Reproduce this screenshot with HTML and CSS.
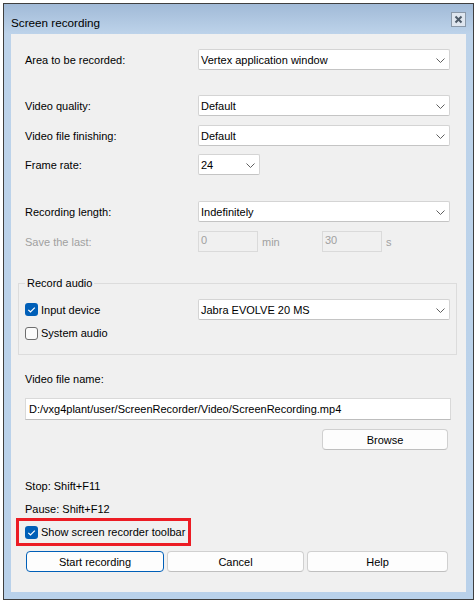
FILE: index.html
```html
<!DOCTYPE html>
<html lang="en">
<head>
<meta charset="utf-8">
<title>Screen recording</title>
<link rel="stylesheet" href="styles.css">
</head>
<body>
<div class="window">
  <div class="titlebar">
    <span class="title">Screen recording</span>
    <span class="close">
      <svg width="15" height="15" viewBox="0 0 15 15">
        <rect x="0.5" y="0.5" width="14" height="14" fill="#dfe6ef" stroke="#8a98a8"/>
        <path d="M4.5 4.5 L10.5 10.5 M10.5 4.5 L4.5 10.5" stroke="#4d5a68" stroke-width="2"/>
      </svg>
    </span>
  </div>
  <div class="client">
    <div class="row r-area">
      <span class="lbl">Area to be recorded:</span>
      <div class="combo"><span class="val">Vertex application window</span><svg class="chev" width="9" height="5" viewBox="0 0 9 5"><polyline points="0.5,0.5 4.5,4.5 8.5,0.5" fill="none" stroke="#5f5f5f"/></svg></div>
    </div>
    <div class="row r-quality">
      <span class="lbl">Video quality:</span>
      <div class="combo"><span class="val">Default</span><svg class="chev" width="9" height="5" viewBox="0 0 9 5"><polyline points="0.5,0.5 4.5,4.5 8.5,0.5" fill="none" stroke="#5f5f5f"/></svg></div>
    </div>
    <div class="row r-finish">
      <span class="lbl">Video file finishing:</span>
      <div class="combo"><span class="val">Default</span><svg class="chev" width="9" height="5" viewBox="0 0 9 5"><polyline points="0.5,0.5 4.5,4.5 8.5,0.5" fill="none" stroke="#5f5f5f"/></svg></div>
    </div>
    <div class="row r-rate">
      <span class="lbl">Frame rate:</span>
      <div class="combo small"><span class="val">24</span><svg class="chev" width="9" height="5" viewBox="0 0 9 5"><polyline points="0.5,0.5 4.5,4.5 8.5,0.5" fill="none" stroke="#5f5f5f"/></svg></div>
    </div>
    <div class="row r-length">
      <span class="lbl">Recording length:</span>
      <div class="combo"><span class="val">Indefinitely</span><svg class="chev" width="9" height="5" viewBox="0 0 9 5"><polyline points="0.5,0.5 4.5,4.5 8.5,0.5" fill="none" stroke="#5f5f5f"/></svg></div>
    </div>
    <div class="row r-save disabled">
      <span class="lbl">Save the last:</span>
      <div class="field small">0</div>
      <span class="unit unit-min">min</span>
      <div class="field small">30</div>
      <span class="unit">s</span>
    </div>

    <fieldset class="group">
      <legend>Record audio</legend>
      <div class="row r-input">
        <span class="lbl check-lbl"><span class="cb on"><svg width="13" height="13" viewBox="0 0 13 13"><polyline points="3.3,6.8 5.5,9 9.8,4.6" fill="none" stroke="#fff" stroke-width="1.2"/></svg></span>Input device</span>
        <div class="combo"><span class="val">Jabra EVOLVE 20 MS</span><svg class="chev" width="9" height="5" viewBox="0 0 9 5"><polyline points="0.5,0.5 4.5,4.5 8.5,0.5" fill="none" stroke="#5f5f5f"/></svg></div>
      </div>
      <div class="row r-system">
        <span class="lbl check-lbl"><span class="cb off"></span>System audio</span>
      </div>
    </fieldset>

    <div class="text r-fname">Video file name:</div>
    <div class="field path">D:/vxg4plant/user/ScreenRecorder/Video/ScreenRecording.mp4</div>
    <div class="browse-row"><button class="btn browse">Browse</button></div>

    <div class="text r-stop">Stop: Shift+F11</div>
    <div class="text r-pause">Pause: Shift+F12</div>
    <div class="highlight">
      <span class="check-lbl"><span class="cb on"><svg width="13" height="13" viewBox="0 0 13 13"><polyline points="3.3,6.8 5.5,9 9.8,4.6" fill="none" stroke="#fff" stroke-width="1.2"/></svg></span>Show screen recorder toolbar</span>
    </div>
    <div class="buttons">
      <button class="btn default start">Start recording</button>
      <button class="btn cancel">Cancel</button>
      <button class="btn help">Help</button>
    </div>
  </div>
</div>
</body>
</html>
```

FILE: styles.css
```css
html, body {
  margin: 0;
  padding: 0;
  background: #ffffff;
}

body {
  font-family: "Liberation Sans", Arial, sans-serif;
  font-size: 11px;
  line-height: 16px;
  color: #000;
}

.window {
  box-sizing: border-box;
  width: 471px;
  height: 597px;
  margin: 3px 0 0 3px;
  border: 1px solid #3f3f3f;
  padding: 0 7px 7px 7px;
  background: linear-gradient(to bottom, #a1bad7 0px, #bdd3ea 30px, #b9d1ea 100%);
  box-shadow: 0 1px 0 #7fc4ee;
}

/* title bar */
.titlebar {
  height: 30px;
  display: flex;
  justify-content: space-between;
  align-items: flex-start;
}

.title {
  margin-top: 11px;
  font-size: 11.7px;
  line-height: 16px;
}

.close {
  display: block;
  width: 15px;
  height: 15px;
  margin-top: 8px;
}

.close svg { display: block; }

/* dialog body */
.client {
  box-sizing: border-box;
  height: 558px;
  background: #f0f0f0;
  padding: 15px 16px 0 14px;
  display: flex;
  flex-direction: column;
  white-space: nowrap;
}

.row {
  display: flex;
  align-items: center;
  height: 21px;
}

.lbl {
  width: 173px;
  flex: none;
}

.r-quality { margin-top: 25px; }
.r-finish  { margin-top: 9px; }
.r-rate    { margin-top: 8px; }
.r-length  { margin-top: 26px; }
.r-save    { margin-top: 9px; }

.combo {
  box-sizing: border-box;
  flex: 1;
  height: 21px;
  background: #ffffff;
  border: 1px solid #d4d4d4;
  border-bottom-color: #c4c4c4;
  border-radius: 2px;
  display: flex;
  align-items: center;
  justify-content: space-between;
  padding: 0 4px 0 2px;
}

.combo.small {
  flex: none;
  width: 62px;
}

.chev {
  display: block;
  margin-top: 1px;
}

.disabled { color: #a0a0a0; }

.field {
  box-sizing: border-box;
  height: 21px;
  border: 1px solid #dadada;
  padding: 0 2px;
  line-height: 17px;
}

.field.small {
  width: 60px;
  background: #f0f0f0;
  color: #a0a0a0;
}

.unit {
  margin-left: 4px;
}

.unit-min {
  width: 60px;
}

/* audio group */
.group {
  margin: 23px -7px 0 -7px;
  padding: 0 6px 13px 6px;
  border: 1px solid #dcdcdc;
  min-width: 0;
}

.group legend {
  padding: 0 2px;
  margin-left: 0;
  line-height: 16px;
}

.r-input { margin-top: 8px; }
.r-system {
  margin-top: 5px;
  height: 16px;
}

.check-lbl {
  display: flex;
  align-items: center;
}

.cb {
  box-sizing: border-box;
  width: 13px;
  height: 13px;
  border-radius: 3px;
  margin-right: 3px;
  flex: none;
}

.cb svg { display: block; }

.cb.on {
  background: #005fb8;
}

.cb.off {
  border: 1px solid #6e6e6e;
  background: #fbfbfb;
}

/* file name */
.r-fname { margin-top: 16px; }

.field.path {
  margin-top: 11px;
  height: 22px;
  background: #ffffff;
  border-color: #d9d9d9;
  border-bottom-color: #bdbdbd;
  padding-left: 3px;
  line-height: 20px;
  margin-right: -1px;
}

.browse-row {
  display: flex;
  justify-content: flex-end;
  margin-top: 9px;
  padding-right: 2px;
}

.btn {
  box-sizing: border-box;
  height: 21px;
  font: inherit;
  color: #000;
  background: #fdfdfd;
  border: 1px solid #d0d0d0;
  border-bottom-color: #bfbfbf;
  border-radius: 4px;
  padding: 0;
  line-height: 18px;
}

.browse { width: 126px; }

.r-stop  { margin-top: 28px; }
.r-pause { margin-top: 7px; }

/* highlighted option */
.highlight {
  box-sizing: border-box;
  width: 175px;
  height: 28px;
  margin: 1px 0 0 -9px;
  border: 3px solid #ec1c24;
  padding-left: 6px;
  display: flex;
  align-items: center;
}

.buttons {
  display: flex;
  gap: 3px;
  margin: 5px 0 0 1px;
}

.start  { width: 138px; }
.cancel { width: 137px; }
.help   { width: 141px; }

.btn.default {
  border-color: #005fb8;
}
```
